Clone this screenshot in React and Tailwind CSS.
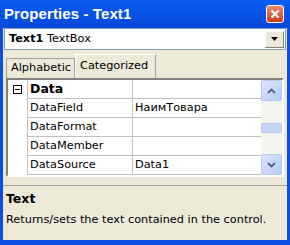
import React from 'react';

const rows = [
  { name: 'DataField', value: 'НаимТовара' },
  { name: 'DataFormat', value: '' },
  { name: 'DataMember', value: '' },
  { name: 'DataSource', value: 'Data1' },
];

function CloseButton() {
  return (
    <div className="w-[18px] h-[18px] rounded-[3px] border border-white bg-gradient-to-b from-[#e88a6c] to-[#c83a1a] flex items-center justify-center">
      <svg width="10" height="10" viewBox="0 0 10 10">
        <path d="M1.5 1.5 L8.5 8.5 M8.5 1.5 L1.5 8.5" stroke="white" strokeWidth="2.2" />
      </svg>
    </div>
  );
}

function ScrollArrow({ up }) {
  return (
    <div className="h-[21px] w-[21px] rounded-[2px] border border-[#b8c8f0] bg-gradient-to-br from-[#dce6fd] to-[#b8cbf5] flex items-center justify-center">
      <svg width="9" height="6" viewBox="0 0 9 6">
        <path d={up ? 'M1 5 L4.5 1.5 L8 5' : 'M1 1 L4.5 4.5 L8 1'} stroke="#4d6185" strokeWidth="1.8" fill="none" />
      </svg>
    </div>
  );
}

export default function App() {
  return (
    <div className="w-[290px] h-[245px] bg-[#0a4fe0] flex flex-col font-['Tahoma','DejaVu_Sans',sans-serif] text-[11.3px] text-black">
      <div className="h-[28px] shrink-0 flex items-center justify-between pl-[4px] pr-[6px] bg-gradient-to-b from-[#0a5ff0] via-[#0652e6] to-[#0a48d8]">
        <span className="text-white font-bold text-[15px] font-['Liberation_Sans',sans-serif] tracking-[0.1px]">Properties - Text1</span>
        <CloseButton />
      </div>
      <div className="flex-1 mx-[3px] mb-[5px] bg-[#ece9d8] flex flex-col">
        <div className="mx-[1px] h-[22px] border border-[#7f9db9] bg-white flex items-center justify-between">
          <span className="pl-[4px]"><b>Text1</b> TextBox</span>
          <div className="w-[19px] h-[17px] mr-[1px] border border-[#808080] border-t-white border-l-white bg-[#ece9d8] flex items-center justify-center">
            <svg width="7" height="4" viewBox="0 0 7 4"><path d="M0 0 H7 L3.5 4 Z" fill="black" /></svg>
          </div>
        </div>
        <div className="mt-[4px] ml-[3px] flex items-end h-[24px]">
          <div className="h-[20px] w-[69px] px-[4px] border border-b-0 border-[#a0a0a0] bg-[#ece9d8] flex items-center">Alphabetic</div>
          <div className="h-[24px] w-[81px] px-[4px] border border-b-0 border-[#a0a0a0] border-t-white border-l-white bg-[#ece9d8] flex items-center">Categorized</div>
        </div>
        <div className="mx-[3px] h-[99px] border-2 border-[#808080] border-r-white border-b-white flex bg-white">
          <div className="w-[20px] border-r border-[#c0c0c0] flex flex-col">
            <div className="h-[19px] flex items-center justify-center">
              <div className="w-[9px] h-[9px] border border-black flex items-center justify-center">
                <div className="w-[5px] h-[1px] bg-black" />
              </div>
            </div>
          </div>
          <div className="flex-1 flex flex-col">
            <div className="h-[19px] flex border-b border-[#c0c0c0]">
              <div className="flex-1 font-bold text-[12.5px] pl-[2px] flex items-center border-r border-[#c0c0c0]">Data</div>
              <div className="w-[128px]" />
            </div>
            {rows.map((r) => (
              <div key={r.name} className="h-[19px] flex border-b border-[#c0c0c0]">
                <div className="flex-1 pl-[2px] flex items-center border-r border-[#c0c0c0]">{r.name}</div>
                <div className="w-[128px] pl-[2px] flex items-center">{r.value}</div>
              </div>
            ))}
          </div>
          <div className="w-[21px] bg-[#f4f3ee] flex flex-col justify-between items-center">
            <ScrollArrow up />
            <div className="w-[21px] h-[10px] rounded-[2px] border border-[#b8c8f0] bg-[#c8d6fb]" />
            <ScrollArrow />
          </div>
        </div>
        <div className="mt-[8px] border-t border-[#a0a0a0]" />
        <div className="px-[3px] pt-[4px]">
          <div className="font-bold text-[12.5px]">Text</div>
          <div className="mt-[3px]">Returns/sets the text contained in the control.</div>
        </div>
      </div>
    </div>
  );
}
